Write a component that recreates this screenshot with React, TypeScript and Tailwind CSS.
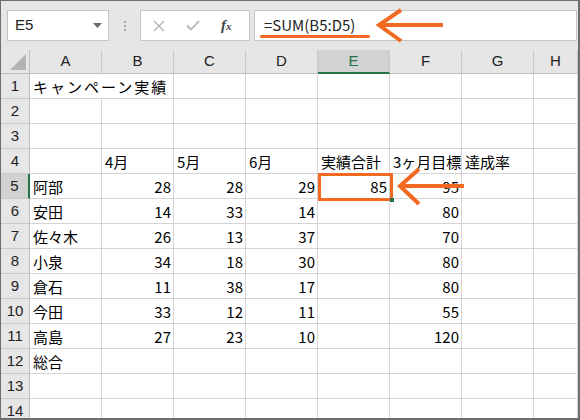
import React from "react";

const COLS = ["A", "B", "C", "D", "E", "F", "G", "H"];

type Row = (string | number | null)[];

const ROWS: Row[] = [
  ["キャンペーン実績"],
  [],
  [],
  [null, "4月", "5月", "6月", "実績合計", "3ヶ月目標", "達成率"],
  ["阿部", 28, 28, 29, 85, 95],
  ["安田", 14, 33, 14, null, 80],
  ["佐々木", 26, 13, 37, null, 70],
  ["小泉", 34, 18, 30, null, 80],
  ["倉石", 11, 38, 17, null, 80],
  ["今田", 33, 12, 11, null, 55],
  ["高島", 27, 23, 10, null, 120],
  ["総合"],
  [],
  [],
];

const FONT = { fontFamily: '"Noto Sans CJK JP", "Noto Sans", sans-serif' };

function Toolbar() {
  return (
    <div className="flex h-[49px] items-center bg-[#e6e6e6] pl-[6px]">
      {/* Name box */}
      <div className="relative flex h-[31px] w-[102px] items-center border border-[#c6c6c6] bg-white pl-[7px]">
        <span className="text-[15px] text-[#222]" style={{ fontFamily: '"Liberation Sans", sans-serif' }}>
          E5
        </span>
        <svg className="absolute right-[6px] top-[12px]" width="9" height="5" viewBox="0 0 9 5">
          <polygon points="0,0 9,0 4.5,5" fill="#6b6b6b" />
        </svg>
      </div>
      {/* dots */}
      <div className="flex w-[31px] flex-col items-center gap-[2px]">
        <span className="h-[2px] w-[2px] bg-[#a8a8a8]" />
        <span className="h-[2px] w-[2px] bg-[#a8a8a8]" />
        <span className="h-[2px] w-[2px] bg-[#a8a8a8]" />
      </div>
      {/* buttons */}
      <div className="flex h-[31px] w-[110px] items-center border border-[#c6c6c6] bg-white">
        <svg className="ml-[12px]" width="12" height="12" viewBox="0 0 12 12">
          <path d="M1 1 L11 11 M11 1 L1 11" stroke="#b4b4b4" strokeWidth="1.4" />
        </svg>
        <svg className="ml-[21px]" width="14" height="11" viewBox="0 0 14 11">
          <path d="M1 5.5 L5 9.5 L13 1" stroke="#b4b4b4" strokeWidth="1.8" fill="none" />
        </svg>
        <span
          className="ml-[21px] text-[15px] font-bold italic text-[#444]"
          style={{ fontFamily: '"Liberation Serif", serif' }}
        >
          f<span className="text-[11px]">x</span>
        </span>
      </div>
      {/* formula input */}
      <div className="ml-[4px] mr-[1px] flex h-[31px] flex-1 items-center border border-[#c6c6c6] bg-white pl-[9px]">
        <span className="text-[15px] text-[#222]" style={FONT}>
          =SUM(B5:D5)
        </span>
      </div>
    </div>
  );
}

function Cell({ v, col, row }: { v: string | number | null | undefined; col: number; row: number }) {
  const isNum = typeof v === "number";
  const overflow = row === 0 && col === 0;
  return (
    <div
      className={`relative h-[25px] border-b border-[#d4d4d4] ${
        overflow ? "z-10 border-r-0" : "border-r"
      } flex items-center pt-[1px] ${isNum ? "justify-end pr-[2px]" : "pl-[3px]"}`}
    >
      {v !== null && v !== undefined && (
        <span
          className={`whitespace-nowrap text-[15px] leading-none text-black ${
            overflow ? "tracking-[2px]" : ""
          }`}
        >
          {v}
        </span>
      )}
    </div>
  );
}

export default function App() {
  return (
    <div
      className="relative h-[420px] w-[580px] overflow-hidden border-b-2 border-l border-r-2 border-t border-[#6e6e6e] bg-white"
      style={FONT}
    >
      <Toolbar />

      <div className="grid grid-cols-[29px_72px_repeat(6,72px)_1fr]">
        {/* corner */}
        <div className="relative h-[24px] border-b border-r border-[#bdbdbd] bg-[#e6e6e6]">
          <svg className="absolute bottom-[3px] right-[3px]" width="16" height="16" viewBox="0 0 16 16">
            <polygon points="16,0 16,16 0,16" fill="#b4b4b4" />
          </svg>
        </div>
        {COLS.map((c) => (
          <div
            key={c}
            className={`flex h-[24px] items-center justify-center border-r border-[#c8c8c8] text-[15px] ${
              c === "E"
                ? "border-b-2 border-b-[#217346] bg-[#d2d2d2] text-[#217346]"
                : "border-b border-b-[#bdbdbd] bg-[#e6e6e6] text-[#222]"
            }`}
            style={{ fontFamily: '"Liberation Sans", sans-serif' }}
          >
            {c}
          </div>
        ))}

        {ROWS.map((r, ri) => (
          <React.Fragment key={ri}>
            <div
              className={`flex h-[25px] items-center justify-center border-b border-[#c8c8c8] text-[15px] text-[#222] ${
                ri === 4
                  ? "border-r-2 border-r-[#217346] bg-[#d2d2d2]"
                  : "border-r border-r-[#bdbdbd] bg-[#e6e6e6]"
              }`}
              style={{ fontFamily: '"Liberation Sans", sans-serif' }}
            >
              {ri + 1}
            </div>
            {COLS.map((_, ci) => (
              <Cell key={ci} v={r[ci]} col={ci} row={ri} />
            ))}
          </React.Fragment>
        ))}
      </div>

      {/* underline on formula */}
      <div className="absolute left-[259px] top-[34px] h-[3px] w-[110px] rounded-full bg-[#f26a21]" />

      {/* arrows and selection highlight */}
      <svg className="absolute left-0 top-0" width="580" height="420" viewBox="0 0 580 420" fill="none">
        <path d="M380 24 H442" stroke="#f26a21" strokeWidth="4" />
        <path d="M400 9 L378 24 L400 40" stroke="#f26a21" strokeWidth="4" />
        <path d="M401 185 H463" stroke="#f26a21" strokeWidth="4" />
        <path d="M418 168 L399 185 L418 203" stroke="#f26a21" strokeWidth="4" />
        <rect x="318.5" y="173.5" width="72" height="25" stroke="#f26a21" strokeWidth="3" />
        <rect x="389" y="197" width="4" height="4" fill="#217346" />
      </svg>
    </div>
  );
}
